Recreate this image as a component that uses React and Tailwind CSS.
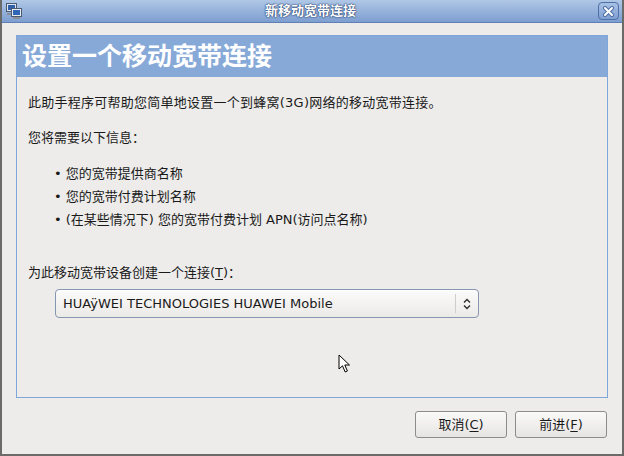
import React from 'react'

const font = { fontFamily: '"DejaVu Sans", "Noto Sans CJK SC", sans-serif' }

const WindowIcon = () => (
    <svg width="18" height="18" viewBox="0 0 18 18">
        <rect x="1.5" y="1.5" width="10" height="8" fill="#dfe6f0" stroke="#4a5a70" />
        <rect x="3" y="3" width="7" height="5" fill="#2f5fa8" />
        <rect x="6.5" y="6.5" width="10" height="8" fill="#e6ebf2" stroke="#4a5a70" />
        <rect x="8" y="8" width="7" height="5" fill="#2f66b8" />
        <rect x="8" y="15" width="7" height="2" fill="#8a8f98" />
        <rect x="2" y="11" width="4" height="2" fill="#8a8f98" />
    </svg>
)

const Cursor = () => (
    <svg width="14" height="20" viewBox="0 0 14 20" className="absolute left-[336px] top-[354px]">
        <path d="M1 1 L1 15 L4.5 11.8 L7.2 18 L9.4 17 L6.8 11 L11.5 11 Z" fill="#fff" stroke="#000" strokeWidth="1" strokeLinejoin="round" />
    </svg>
)

const Mnemonic = ({ label, k }) => (
    <span>
        {label}(<span className="underline underline-offset-2">{k}</span>)
    </span>
)

export default function App() {
    return (
        <div className="relative w-[624px] h-[456px] bg-[#edecea] border-l-2 border-r-2 border-b-2 border-[#6a6a6a] flex flex-col text-[13px] text-[#1a1a1a]" style={font}>
            {/* title bar */}
            <div className="h-[23px] shrink-0 flex items-center justify-between px-[3px] bg-gradient-to-b from-[#b0c7e6] to-[#7d9ed0] border-b border-[#5f7fb5]">
                <WindowIcon />
                <span className="text-white font-bold text-[13px] [text-shadow:0_0_2px_#2b4777,0_0_1px_#2b4777,0_0_1px_#2b4777]">新移动宽带连接</span>
                <div className="w-[21px] h-[18px] rounded-[4px] border border-[#4f6fa6] bg-gradient-to-b from-[#a9c1e4] to-[#7f9fd2] flex items-center justify-center">
                    <svg width="11" height="11" viewBox="0 0 11 11">
                        <path d="M2 2 L9 9 M9 2 L2 9" stroke="#4f6fa6" strokeWidth="4" strokeLinecap="round" />
                        <path d="M2 2 L9 9 M9 2 L2 9" stroke="#fff" strokeWidth="2" strokeLinecap="round" />
                    </svg>
                </div>
            </div>

            {/* panel */}
            <div className="mt-[12px] ml-[14px] mr-[14px] h-[363px] border border-[#7fa6da] flex flex-col">
                <div className="h-[41px] bg-[#87a9d8] flex items-center pl-[5px]">
                    <span className="text-white font-bold text-[25px] leading-none">设置一个移动宽带连接</span>
                </div>
                <div className="pl-[11px] leading-[17px]">
                    <div className="mt-[17px] tracking-[0.25px]">此助手程序可帮助您简单地设置一个到蜂窝(3G)网络的移动宽带连接。</div>
                    <div className="mt-[18px]">您将需要以下信息：</div>
                    <ul className="mt-[19px] pl-[26px] flex flex-col gap-[6px]">
                        <li className="flex items-center gap-[4px]"><span>•</span>您的宽带提供商名称</li>
                        <li className="flex items-center gap-[4px]"><span>•</span>您的宽带付费计划名称</li>
                        <li className="flex items-center gap-[4px]"><span>•</span>(在某些情况下) 您的宽带付费计划 APN(访问点名称)</li>
                    </ul>
                    <div className="mt-[36px]">为此移动宽带设备创建一个连接(<span className="underline underline-offset-2">T</span>)：</div>
                    <div className="mt-[8px] ml-[27px] w-[424px] h-[29px] rounded-[4px] border border-[#8796b0] bg-gradient-to-b from-[#fbfbfb] to-[#eceae7] flex items-center shadow-[inset_0_1px_0_#fff]">
                        <span className="flex-1 pl-[7px]">HUAÿWEI TECHNOLOGIES HUAWEI Mobile</span>
                        <div className="w-px h-[19px] bg-[#cfcdc9]" />
                        <svg width="22" height="16" viewBox="0 0 22 16">
                            <path d="M8 6.5 L11 3.5 L14 6.5 M8 9.5 L11 12.5 L14 9.5" fill="none" stroke="#2a2a2a" strokeWidth="1.3" />
                        </svg>
                    </div>
                </div>
            </div>

            {/* buttons */}
            <div className="mt-[13px] flex justify-end gap-[8px] pr-[15px]">
                <button className="w-[92px] h-[27px] rounded-[3px] border border-[#8c8c8c] bg-gradient-to-b from-[#fafafa] to-[#e6e4e1]">
                    <Mnemonic label="取消" k="C" />
                </button>
                <button className="w-[92px] h-[27px] rounded-[3px] border border-[#8c8c8c] bg-gradient-to-b from-[#fafafa] to-[#e6e4e1]">
                    <Mnemonic label="前进" k="F" />
                </button>
            </div>

            <Cursor />
        </div>
    )
}
